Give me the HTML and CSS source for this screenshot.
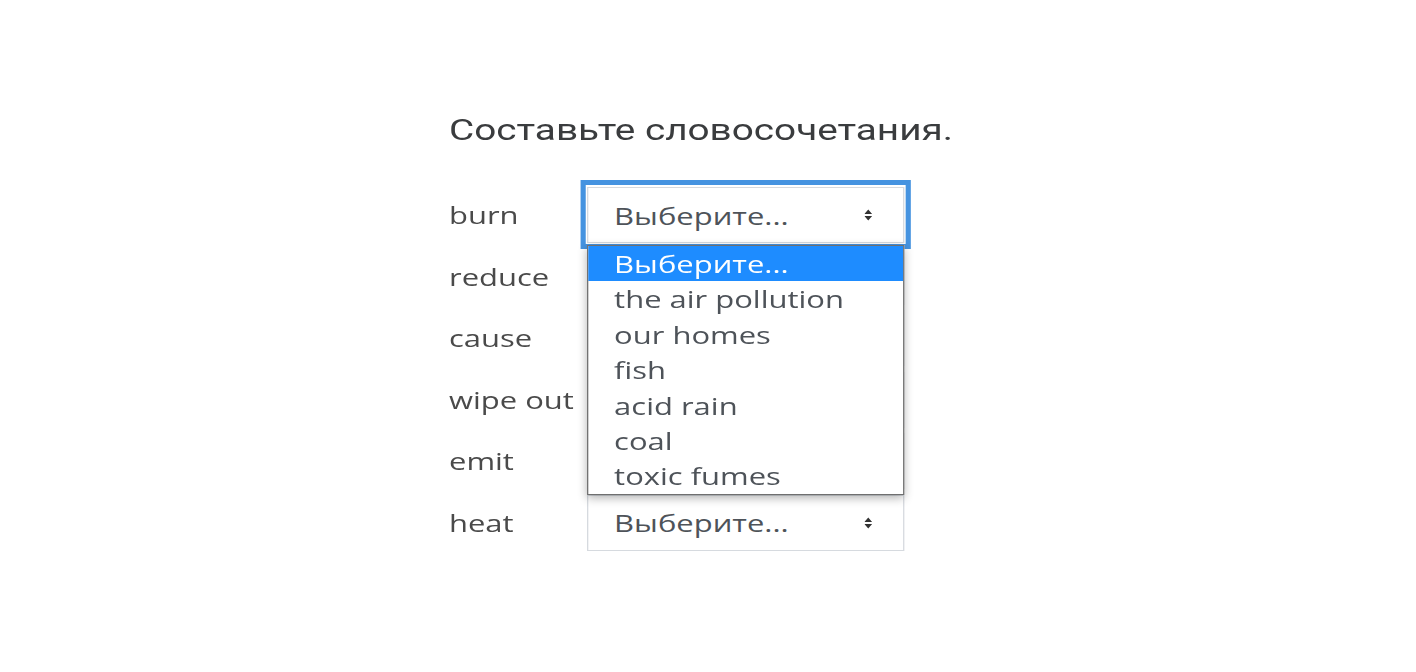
FILE: index.html
```html
<!DOCTYPE html>
<html lang="ru">
<head>
<meta charset="utf-8">
<title>Составьте словосочетания</title>
<link rel="stylesheet" href="styles.css">
</head>
<body>
<div class="page">
  <div class="wrap">
    <h1 class="title">Составьте словосочетания.</h1>
    <div class="rows">
      <div class="row">
        <span class="label">burn</span>
        <div class="select focused">
          <span class="value">Выберите...</span>
          <svg class="caret" width="6" height="12" viewBox="0 0 6 12"><path d="M0 5 L3 0.6 L6 5 Z M0 7 L6 7 L3 11.4 Z" fill="#333"/></svg>
          <ul class="list">
            <li class="opt active">Выберите...</li>
            <li class="opt">the air pollution</li>
            <li class="opt">our homes</li>
            <li class="opt">fish</li>
            <li class="opt">acid rain</li>
            <li class="opt">coal</li>
            <li class="opt">toxic fumes</li>
          </ul>
        </div>
      </div>
      <div class="row">
        <span class="label">reduce</span>
        <div class="select">
          <span class="value">Выберите...</span>
          <svg class="caret" width="6" height="12" viewBox="0 0 6 12"><path d="M0 5 L3 0.6 L6 5 Z M0 7 L6 7 L3 11.4 Z" fill="#333"/></svg>
        </div>
      </div>
      <div class="row">
        <span class="label">cause</span>
        <div class="select">
          <span class="value">Выберите...</span>
          <svg class="caret" width="6" height="12" viewBox="0 0 6 12"><path d="M0 5 L3 0.6 L6 5 Z M0 7 L6 7 L3 11.4 Z" fill="#333"/></svg>
        </div>
      </div>
      <div class="row">
        <span class="label">wipe out</span>
        <div class="select">
          <span class="value">Выберите...</span>
          <svg class="caret" width="6" height="12" viewBox="0 0 6 12"><path d="M0 5 L3 0.6 L6 5 Z M0 7 L6 7 L3 11.4 Z" fill="#333"/></svg>
        </div>
      </div>
      <div class="row">
        <span class="label">emit</span>
        <div class="select">
          <span class="value">Выберите...</span>
          <svg class="caret" width="6" height="12" viewBox="0 0 6 12"><path d="M0 5 L3 0.6 L6 5 Z M0 7 L6 7 L3 11.4 Z" fill="#333"/></svg>
        </div>
      </div>
      <div class="row">
        <span class="label">heat</span>
        <div class="select">
          <span class="value">Выберите...</span>
          <svg class="caret" width="6" height="12" viewBox="0 0 6 12"><path d="M0 5 L3 0.6 L6 5 Z M0 7 L6 7 L3 11.4 Z" fill="#333"/></svg>
        </div>
      </div>
    </div>
  </div>
</div>
</body>
</html>
```
FILE: styles.css
```css
html, body {
  margin: 0;
  padding: 0;
  background: #ffffff;
}

.page {
  padding-top: 110px;
  height: 562px;
  overflow: hidden;
}

.wrap {
  margin-left: 449px;
  width: 420px;
  transform: scaleX(1.29);
  transform-origin: 0 0;
}

.title {
  margin: 0;
  font-family: Roboto, "Liberation Sans", sans-serif;
  font-weight: 400;
  font-size: 30px;
  line-height: 40px;
  color: #3a3c3e;
}

.rows {
  margin-top: 37px;
  display: flex;
  flex-direction: column;
  gap: 5.5px;
}

.row {
  display: flex;
  align-items: center;
  height: 56px;
}

.label {
  width: 107px;
  font-family: "Open Sans", sans-serif;
  font-size: 24px;
  line-height: 56px;
  color: #4a4a4a;
}

.select {
  position: relative;
  width: 246px;
  height: 56px;
  box-sizing: border-box;
  border: 1px solid #d6dadf;
  display: flex;
  align-items: center;
  padding-left: 20px;
  font-family: "Open Sans", sans-serif;
  font-size: 24px;
  color: #4e5359;
  background: #fff;
}

.select.focused::before {
  content: "";
  position: absolute;
  top: -8px;
  bottom: -7px;
  left: -6.5px;
  right: -6px;
  border-style: solid;
  border-color: #4593e0;
  border-width: 5px 4px;
  pointer-events: none;
}

.value {
  flex: 1;
}

.caret {
  display: block;
  flex: none;
  width: 6px;
  height: 12px;
  margin-right: 24px;
}

.list {
  position: absolute;
  top: 57px;
  left: -1px;
  width: 246px;
  box-sizing: border-box;
  margin: 0;
  padding: 0;
  list-style: none;
  border: 1px solid #6f6f6f;
  background: #fff;
  box-shadow: 0 3px 8px rgba(0, 0, 0, 0.3);
  z-index: 5;
}

.opt {
  height: 35.4px;
  line-height: 35.4px;
  padding-left: 20px;
  font-family: "Open Sans", sans-serif;
  font-size: 24px;
  color: #4e5359;
  white-space: nowrap;
}

.opt.active {
  background: #1e8cff;
  color: #fff;
}
```
